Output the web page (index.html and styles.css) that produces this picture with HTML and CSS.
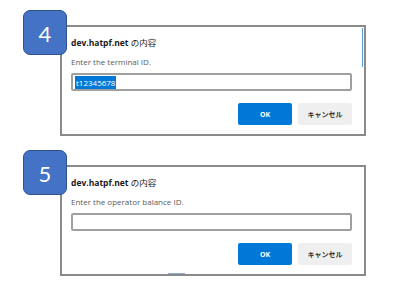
FILE: index.html
```html
<!DOCTYPE html>
<html lang="ja">
  <head>
    <meta charset="UTF-8" />
    <meta name="viewport" content="width=device-width, initial-scale=1.0" />
    <title>Prompt steps</title>
    <link rel="stylesheet" href="styles.css">
  </head>
  <body>
    <div class="page">
      <section class="step">
        <div class="badge">4</div>
        <div class="dialog has-thumb">
          <p class="title"><b>dev.hatpf.net</b> の内容</p>
          <p class="prompt">Enter the terminal ID.</p>
          <div class="field"><span class="selected">t12345678</span></div>
          <div class="actions">
            <button class="ok">OK</button>
            <button class="cancel">キャンセル</button>
          </div>
        </div>
      </section>
      <section class="step">
        <div class="badge">5</div>
        <div class="dialog has-mark">
          <p class="title"><b>dev.hatpf.net</b> の内容</p>
          <p class="prompt">Enter the operator balance ID.</p>
          <div class="field"></div>
          <div class="actions">
            <button class="ok">OK</button>
            <button class="cancel">キャンセル</button>
          </div>
        </div>
      </section>
    </div>
  </body>
</html>
```

FILE: styles.css
```css
* {
  box-sizing: border-box;
  --text-color: #1a1a1a;
  --muted-color: #5a5a5a;
  --border-color: #8a8a8a;
  --primary-color: #0078d7;
}

body {
  margin: 0;
  background: #fff;
  font-family: "Open Sans", "Noto Sans CJK JP", sans-serif;
  color: var(--text-color);
}

p {
  margin: 0;
}

.page {
  display: grid;
  gap: 29px;
  padding: 25px 0 0 60px;
}

.step {
  position: relative;
  width: 306px;

  .badge {
    position: absolute;
    left: -37px;
    top: -15px;
    width: 44px;
    height: 45px;
    display: grid;
    place-items: center;
    padding-top: 3px;
    background: #4472c4;
    border: 1px solid #2f528f;
    border-radius: 7px;
    color: #fff;
    font-family: Lato, "Open Sans", sans-serif;
    font-size: 22px;
    line-height: 1;
    z-index: 1;
  }
}

.dialog {
  position: relative;
  height: 111px;
  border: 2px solid var(--border-color);
  padding: 10px 12px 0 9px;
  display: flex;
  flex-direction: column;

  .title {
    font-size: 8.5px;
    line-height: 12px;
    b {
      font-weight: 700;
    }
  }

  .prompt {
    margin-top: 7px;
    font-size: 8px;
    line-height: 12px;
    color: var(--muted-color);
  }

  .field {
    margin-top: 5px;
    height: 18px;
    border: 2px solid #a0a0a0;
    border-radius: 2px;
    padding: 1px 2px;
    display: flex;
    align-items: center;

    .selected {
      background: #0078d7;
      color: #fff;
      font-size: 8px;
      line-height: 13px;
      padding: 0 1px;
    }
  }

  .actions {
    margin-top: 12px;
    display: flex;
    justify-content: flex-end;
    gap: 6px;

    button {
      width: 54px;
      height: 22px;
      border: 0;
      border-radius: 2px;
      font-family: "Open Sans", "Noto Sans CJK JP", sans-serif;
      font-size: 7px;
      font-weight: 700;
      padding: 0;
    }

    .ok {
      background: var(--primary-color);
      color: #fff;
    }

    .cancel {
      background: #efefef;
      color: #333;
    }
  }
}

.has-thumb::after {
  content: "";
  position: absolute;
  right: 1px;
  top: 1px;
  width: 1px;
  height: 39px;
  background: #5b9bd5;
}

.has-mark::after {
  content: "";
  position: absolute;
  left: 106px;
  bottom: 0;
  width: 17px;
  height: 1px;
  background: #8eaadb;
}
```
